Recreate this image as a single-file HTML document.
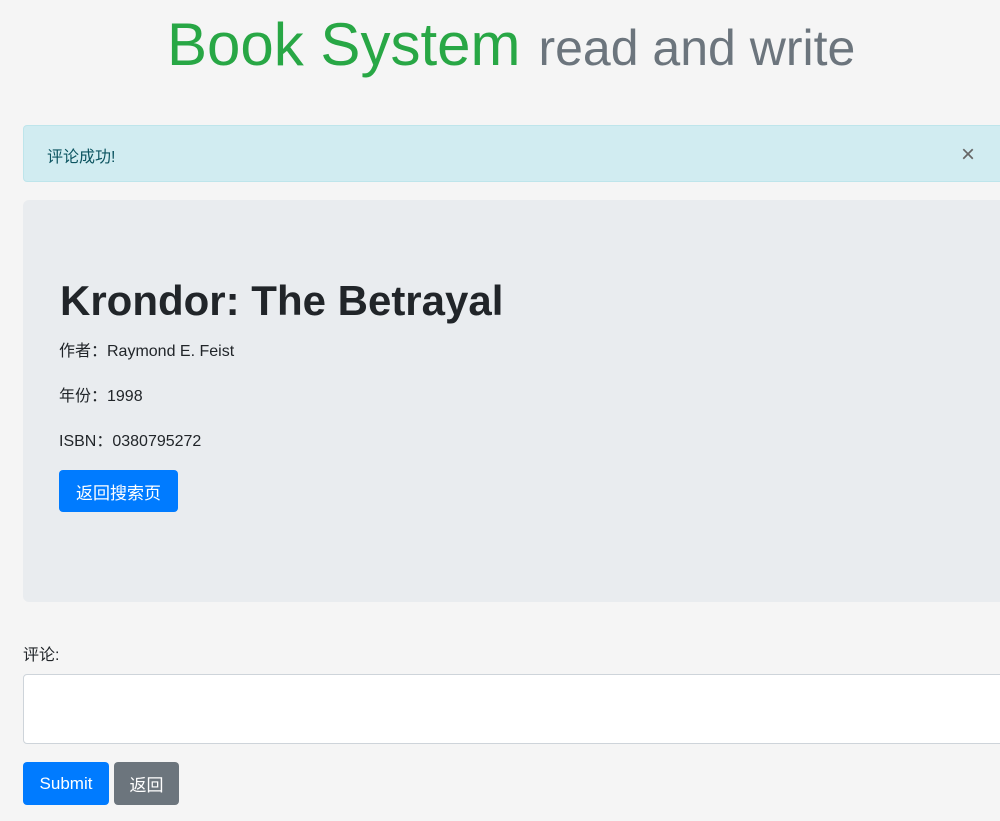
<!DOCTYPE html>
<html><head><meta charset="utf-8"><style>
body{margin:0;background:#f5f5f5;font-family:"Liberation Sans","Noto Sans CJK SC",sans-serif;color:#212529;font-size:16px;width:1000px;height:821px;overflow:hidden;position:relative}
.abs{position:absolute}
.btn{position:absolute;color:#fff;border-radius:4px;font-size:17px;display:flex;align-items:center;justify-content:center}
</style></head><body>
<div class="abs" style="left:167px;top:10px;white-space:nowrap"><span style="color:#28a745;font-size:60px">Book System</span><span style="color:#6c757d;font-size:50px;margin-left:18px">read and write</span></div>
<div class="abs" style="left:23px;top:125px;width:1000px;height:55px;background:#d1ecf1;border:1px solid #bee5eb;border-radius:4px;color:#0c5460"><span class="abs" style="left:23px;top:17px">评论成功!</span><span class="abs" style="left:937px;top:15px;font-size:24px;color:#666">×</span></div>
<div class="abs" style="left:23px;top:200px;width:1000px;height:402px;background:#e9ecef;border-radius:6px">
<div class="abs" style="left:37px;top:77px;font-size:42px;font-weight:bold">Krondor: The Betrayal</div>
<div class="abs" style="left:36px;top:137px">作者：Raymond E. Feist</div>
<div class="abs" style="left:36px;top:182px">年份：1998</div>
<div class="abs" style="left:36px;top:227px">ISBN：0380795272</div>
<div class="btn" style="left:36px;top:270px;width:119px;height:42px;background:#007bff">返回搜索页</div>
</div>
<div class="abs" style="left:23px;top:641px">评论:</div>
<div class="abs" style="left:23px;top:674px;width:1000px;height:68px;background:#fff;border:1px solid #ced4da;border-radius:4px"></div>
<div class="btn" style="left:23px;top:762px;width:86px;height:43px;background:#007bff">Submit</div>
<div class="btn" style="left:114px;top:762px;width:65px;height:43px;background:#6c757d">返回</div>
</body></html>
